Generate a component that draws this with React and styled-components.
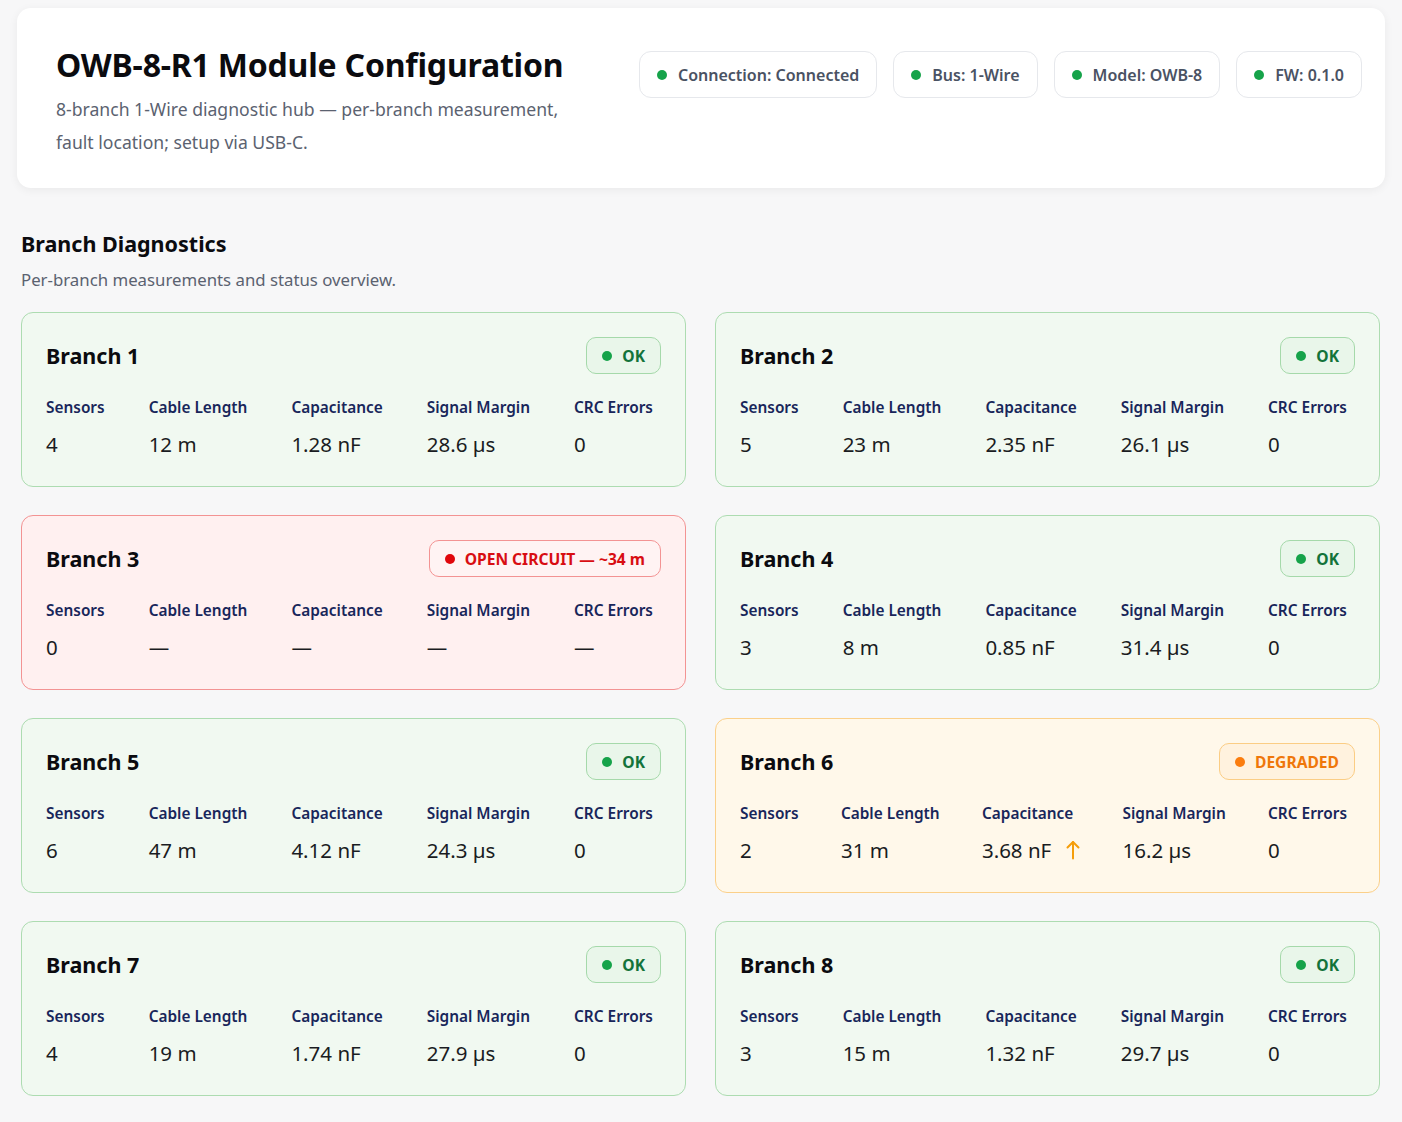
import React from "react";
import styled, { createGlobalStyle } from "styled-components";

const GlobalStyle = createGlobalStyle`
  * { box-sizing: border-box; }
  body {
    margin: 0;
    background: #f7f7f8;
    font-family: "Noto Sans", "Open Sans", Arial, sans-serif;
    color: #111827;
  }
`;

const tones = {
  ok: { bg: "#f1f9f1", border: "#addcb1", pillBg: "#e9f6ea", pillBorder: "#a5d9aa", text: "#13733a", dot: "#16a34a" },
  fail: { bg: "#fff0f0", border: "#f39393", pillBg: "#fff3f3", pillBorder: "#f39393", text: "#d80d12", dot: "#e0060b" },
  warn: { bg: "#fff8ea", border: "#fbd08a", pillBg: "#fff2de", pillBorder: "#fbcd84", text: "#ef770a", dot: "#fb7d0e" },
};

const Page = styled.div`
  padding: 8px 17px 24px;
`;

const Header = styled.header`
  display: flex;
  justify-content: space-between;
  align-items: flex-start;
  background: #fff;
  border-radius: 14px;
  box-shadow: 0 2px 10px rgba(0, 0, 0, 0.06);
  padding: 37px 23px 29px 39px;
`;

const TitleBlock = styled.div`
  max-width: 560px;
`;

const Title = styled.h1`
  margin: 0 0 8px;
  font-size: 32px;
  line-height: 40px;
  font-weight: 700;
  color: #0b0b0f;
  letter-spacing: -0.2px;
`;

const Subtitle = styled.p`
  margin: 0;
  max-width: 520px;
  font-size: 17.6px;
  line-height: 33px;
  color: #5b6270;
`;

const Pills = styled.div`
  display: flex;
  gap: 16px;
  margin-top: 6px;
`;

const Pill = styled.div`
  display: flex;
  align-items: center;
  gap: 11px;
  height: 47px;
  padding: 0 17px;
  border: 1.5px solid #e6e8ec;
  border-radius: 12px;
  background: #fff;
  font-size: 16px;
  font-weight: 600;
  color: #4a5263;
`;

const Dot = styled.span`
  width: 10px;
  height: 10px;
  border-radius: 50%;
  background: ${(p) => p.$color};
  flex-shrink: 0;
`;

const Section = styled.section`
  padding: 0 5px 0 4px;
  margin-top: 40px;
`;

const SectionTitle = styled.h2`
  margin: 0;
  font-size: 21.5px;
  line-height: 32px;
  font-weight: 700;
  color: #0b0b0f;
`;

const SectionSub = styled.p`
  margin: 7px 0 19px;
  font-size: 16.8px;
  line-height: 26px;
  color: #5b6270;
`;

const Grid = styled.div`
  display: grid;
  grid-template-columns: 1fr 1fr;
  column-gap: 29px;
  row-gap: 28px;
`;

const Card = styled.div`
  background: ${(p) => tones[p.$tone].bg};
  border: 1.5px solid ${(p) => tones[p.$tone].border};
  border-radius: 12px;
  padding: 24px 24px 28px;
`;

const CardHead = styled.div`
  display: flex;
  justify-content: space-between;
  align-items: center;
`;

const CardTitle = styled.h3`
  margin: 0;
  font-size: 21.5px;
  font-weight: 700;
  color: #0b0b0f;
`;

const Badge = styled.div`
  display: flex;
  align-items: center;
  gap: 10px;
  height: 37px;
  padding: 0 15px;
  border-radius: 10px;
  border: 1.5px solid ${(p) => tones[p.$tone].pillBorder};
  background: ${(p) => tones[p.$tone].pillBg};
  color: ${(p) => tones[p.$tone].text};
  font-size: 15.6px;
  font-weight: 700;
`;

const Metrics = styled.div`
  display: flex;
  justify-content: space-between;
  margin-top: 24px;
  padding-right: 8px;
`;

const Metric = styled.div`
  display: flex;
  flex-direction: column;
  gap: 12px;
`;

const Label = styled.div`
  font-size: 15.4px;
  line-height: 20px;
  font-weight: 600;
  color: #18265a;
`;

const Value = styled.div`
  font-size: 20.5px;
  line-height: 28px;
  color: #1a1c22;
  display: flex;
  align-items: center;
  gap: 15px;
`;

const Arrow = () => (
  <svg width="14" height="20" viewBox="0 0 14 20" fill="none" stroke="#f59e0b" strokeWidth="2" strokeLinecap="round" strokeLinejoin="round">
    <path d="M7 18.5V2" />
    <path d="M1.5 7.5L7 2l5.5 5.5" />
  </svg>
);

const pills = ["Connection: Connected", "Bus: 1-Wire", "Model: OWB-8", "FW: 0.1.0"];

const branches = [
  { n: 1, tone: "ok", status: "OK", v: ["4", "12 m", "1.28 nF", "28.6 µs", "0"] },
  { n: 2, tone: "ok", status: "OK", v: ["5", "23 m", "2.35 nF", "26.1 µs", "0"] },
  { n: 3, tone: "fail", status: "OPEN CIRCUIT — ~34 m", v: ["0", "—", "—", "—", "—"] },
  { n: 4, tone: "ok", status: "OK", v: ["3", "8 m", "0.85 nF", "31.4 µs", "0"] },
  { n: 5, tone: "ok", status: "OK", v: ["6", "47 m", "4.12 nF", "24.3 µs", "0"] },
  { n: 6, tone: "warn", status: "DEGRADED", v: ["2", "31 m", "3.68 nF", "16.2 µs", "0"], up: 2 },
  { n: 7, tone: "ok", status: "OK", v: ["4", "19 m", "1.74 nF", "27.9 µs", "0"] },
  { n: 8, tone: "ok", status: "OK", v: ["3", "15 m", "1.32 nF", "29.7 µs", "0"] },
];

const labels = ["Sensors", "Cable Length", "Capacitance", "Signal Margin", "CRC Errors"];

const BranchCard = ({ b }) => (
  <Card $tone={b.tone}>
    <CardHead>
      <CardTitle>Branch {b.n}</CardTitle>
      <Badge $tone={b.tone}>
        <Dot $color={tones[b.tone].dot} />
        {b.status}
      </Badge>
    </CardHead>
    <Metrics>
      {labels.map((l, i) => (
        <Metric key={l}>
          <Label>{l}</Label>
          <Value>
            {b.v[i]}
            {b.up === i && <Arrow />}
          </Value>
        </Metric>
      ))}
    </Metrics>
  </Card>
);

const App = () => (
  <>
    <GlobalStyle />
    <Page>
      <Header>
        <TitleBlock>
          <Title>OWB-8-R1 Module Configuration</Title>
          <Subtitle>
            8-branch 1-Wire diagnostic hub — per-branch measurement, fault location; setup via USB-C.
          </Subtitle>
        </TitleBlock>
        <Pills>
          {pills.map((p) => (
            <Pill key={p}>
              <Dot $color="#16a34a" />
              {p}
            </Pill>
          ))}
        </Pills>
      </Header>
      <Section>
        <SectionTitle>Branch Diagnostics</SectionTitle>
        <SectionSub>Per-branch measurements and status overview.</SectionSub>
        <Grid>
          {branches.map((b) => (
            <BranchCard key={b.n} b={b} />
          ))}
        </Grid>
      </Section>
    </Page>
  </>
);

export default App;
